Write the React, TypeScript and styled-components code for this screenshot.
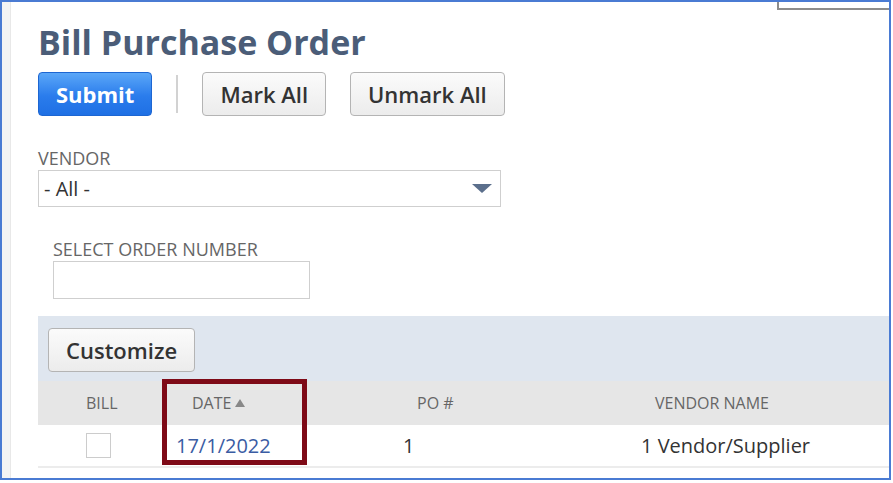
import React from 'react';
import styled, { createGlobalStyle } from 'styled-components';

const GlobalStyle = createGlobalStyle`
  html, body {
    margin: 0;
    padding: 0;
    background: #ffffff;
  }
  * {
    box-sizing: border-box;
  }
`;

const Frame = styled.div`
  position: relative;
  width: 891px;
  height: 480px;
  border: 2px solid #4a7bd3;
  display: flex;
  overflow: hidden;
  background: #ffffff;
  font-family: 'Open Sans', 'Noto Sans', sans-serif;
`;

const SideStrip = styled.div`
  width: 9px;
  flex-shrink: 0;
  background: #f4f4f4;
  border-right: 1px solid #e8e8e8;
`;

const CornerTab = styled.div`
  position: absolute;
  top: 0;
  right: 0;
  width: 112px;
  height: 8px;
  border-left: 2px solid #8c8c8c;
  border-bottom: 2px solid #8c8c8c;
`;

const Content = styled.div`
  flex: 1;
  padding: 17px 0 0 27px;
  display: flex;
  flex-direction: column;
`;

const Title = styled.h1`
  margin: 0;
  font-size: 34px;
  line-height: 46px;
  font-weight: 700;
  color: #4b5d78;
  white-space: nowrap;
`;

const Toolbar = styled.div`
  margin-top: 7px;
  display: flex;
  align-items: center;
  gap: 24px;
`;

const Button = styled.button<{ $primary?: boolean }>`
  height: 44px;
  padding: 0 17px;
  border-radius: 4px;
  font-family: 'Open Sans', 'Noto Sans', sans-serif;
  font-size: 22px;
  font-weight: ${(p) => (p.$primary ? 700 : 600)};
  color: ${(p) => (p.$primary ? '#ffffff' : '#333333')};
  border: 1px solid ${(p) => (p.$primary ? '#1d66d2' : '#b4b4b4')};
  background: ${(p) =>
    p.$primary
      ? 'linear-gradient(to bottom, #5ba7f8 0%, #2a7cec 55%, #1f70e4 100%)'
      : 'linear-gradient(to bottom, #fbfbfb 0%, #ececec 100%)'};
  cursor: pointer;
  white-space: nowrap;
`;

const Separator = styled.div`
  width: 2px;
  height: 38px;
  background: #d2d2d2;
`;

const Field = styled.div<{ $indent?: number; $top: number }>`
  margin-top: ${(p) => p.$top}px;
  margin-left: ${(p) => p.$indent ?? 0}px;
  display: flex;
  flex-direction: column;
`;

const Label = styled.label`
  font-size: 18px;
  line-height: 24px;
  color: #666666;
  text-transform: uppercase;
  white-space: nowrap;
`;

const SelectBox = styled.div`
  width: 463px;
  height: 37px;
  border: 1px solid #cfcfcf;
  display: flex;
  align-items: center;
  justify-content: space-between;
  padding: 0 8px 0 5px;
  font-size: 20px;
  color: #333333;
`;

const TextBox = styled.div`
  width: 257px;
  height: 38px;
  border: 1px solid #cfcfcf;
  background: #ffffff;
`;

const Grid = styled.div`
  margin-top: 17px;
  display: flex;
  flex-direction: column;
`;

const GridBar = styled.div`
  height: 65px;
  background: #dfe6ef;
  padding: 12px 0 0 10px;
`;

const Table = styled.div`
  position: relative;
  border-bottom: 2px solid #ececec;
`;

const Row = styled.div<{ $head?: boolean }>`
  display: grid;
  grid-template-columns: 124px 227px 238px 1fr;
  align-items: center;
  height: ${(p) => (p.$head ? 44 : 41)}px;
  background: ${(p) => (p.$head ? '#e6e6e6' : '#ffffff')};
`;

const HeadCell = styled.div<{ $pad: number }>`
  padding-left: ${(p) => p.$pad}px;
  font-size: 16px;
  color: #666666;
  text-transform: uppercase;
  white-space: nowrap;
  display: flex;
  align-items: center;
  gap: 4px;
`;

const Cell = styled.div<{ $pad: number; $link?: boolean }>`
  padding-left: ${(p) => p.$pad}px;
  font-size: 20px;
  color: ${(p) => (p.$link ? '#3a5ca3' : '#333333')};
  white-space: nowrap;
  display: flex;
  align-items: center;
`;

const CheckBox = styled.div`
  width: 25px;
  height: 25px;
  border: 1px solid #cccccc;
  background: #ffffff;
`;

const Highlight = styled.div`
  position: absolute;
  left: 124px;
  top: -2px;
  width: 145px;
  height: 86px;
  border: 5px solid #7e0a17;
  pointer-events: none;
`;

const App: React.FC = () => {
  return (
    <>
      <GlobalStyle />
      <Frame>
        <SideStrip />
        <CornerTab />
        <Content>
          <Title>Bill Purchase Order</Title>
          <Toolbar>
            <Button $primary>Submit</Button>
            <Separator />
            <Button>Mark All</Button>
            <Button>Unmark All</Button>
          </Toolbar>

          <Field $top={30}>
            <Label>Vendor</Label>
            <SelectBox>
              <span>- All -</span>
              <svg width="20" height="9" viewBox="0 0 20 9">
                <polygon points="0,0 20,0 10,9" fill="#5b6f8c" />
              </svg>
            </SelectBox>
          </Field>

          <Field $top={30} $indent={15}>
            <Label>Select Order Number</Label>
            <TextBox />
          </Field>

          <Grid>
            <GridBar>
              <Button>Customize</Button>
            </GridBar>
            <Table>
              <Row $head>
                <HeadCell $pad={48}>Bill</HeadCell>
                <HeadCell $pad={30}>
                  Date
                  <svg width="10" height="8" viewBox="0 0 10 8">
                    <polygon points="5,0 10,8 0,8" fill="#888888" />
                  </svg>
                </HeadCell>
                <HeadCell $pad={28}>PO #</HeadCell>
                <HeadCell $pad={28}>Vendor Name</HeadCell>
              </Row>
              <Row>
                <Cell $pad={48}>
                  <CheckBox />
                </Cell>
                <Cell $pad={14} $link>
                  17/1/2022
                </Cell>
                <Cell $pad={14}>1</Cell>
                <Cell $pad={14}>1 Vendor/Supplier</Cell>
              </Row>
              <Highlight />
            </Table>
          </Grid>
        </Content>
      </Frame>
    </>
  );
};

export default App;
